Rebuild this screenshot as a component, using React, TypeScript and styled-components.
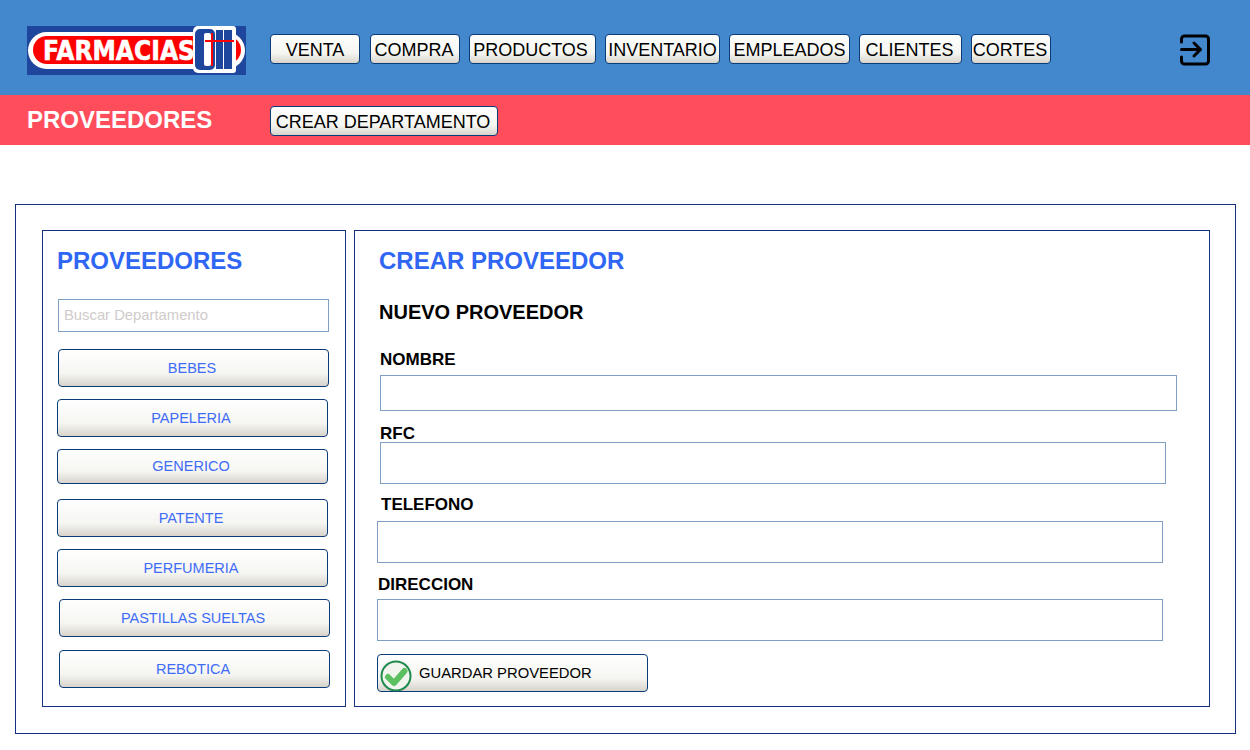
import styled, { createGlobalStyle } from 'styled-components';

const GlobalStyle = createGlobalStyle`
	html, body {
		margin: 0;
		padding: 0;
		background: #fff;
		font-family: 'Liberation Sans', Arial, sans-serif;
	}
	* {
		box-sizing: border-box;
	}
`;

const Header = styled.header`
	height: 95px;
	background: #4387cd;
	display: flex;
	align-items: center;
	padding: 0 27px;
`;

const Logo = styled.svg`
	width: 219px;
	height: 49px;
	flex-shrink: 0;
	margin-top: 6px;
`;

const Nav = styled.nav`
	display: flex;
	gap: 9px;
	margin-left: 24px;
	flex: 1;
	margin-top: 3px;
`;

const glossy = `
	background: linear-gradient(to bottom, #ffffff 0%, #f5f5f1 65%, #d8d4cc 100%);
	border: 1px solid #0a3d78;
	border-radius: 4px;
	cursor: pointer;
	font-family: 'Liberation Sans', Arial, sans-serif;
`;

const NavButton = styled.button<{ $width: number; $gapRight: number; $nudge: number }>`
	${glossy}
	width: ${(p) => p.$width}px;
	height: 30px;
	margin-right: ${(p) => p.$gapRight}px;
	padding: 2px ${(p) => p.$nudge}px 0 0;
	font-size: 18px;
	color: #000;
`;

const ExitIcon = styled.svg`
	width: 32px;
	height: 32px;
	margin-right: 11px;
	margin-top: 5px;
	flex-shrink: 0;
`;

const SubBar = styled.div`
	height: 50px;
	background: #ff4d5c;
	display: flex;
	align-items: center;
	padding: 0 27px;
`;

const SubTitle = styled.h1`
	margin: 0;
	width: 243px;
	font-size: 24px;
	font-weight: 700;
	color: #fff;
`;

const CreateButton = styled.button`
	${glossy}
	width: 228px;
	height: 30px;
	margin-top: 1px;
	padding: 3px 2px 0 0;
	font-size: 18px;
	color: #000;
`;

const Frame = styled.main`
	margin: 59px 14px 0 15px;
	height: 530px;
	border: 1px solid #14307e;
	padding: 25px 25px 26px 26px;
	display: flex;
	gap: 8px;
`;

const Sidebar = styled.aside`
	width: 304px;
	border: 1px solid #14307e;
	padding: 14px 15px 0 14px;
	display: flex;
	flex-direction: column;
`;

const SectionTitle = styled.h2`
	margin: 0;
	font-size: 24px;
	line-height: 32px;
	font-weight: 700;
	color: #2f66f4;
`;

const Search = styled.input`
	width: 271px;
	height: 33px;
	margin: 22px 0 17px 1px;
	padding: 0 5px 2px;
	border: 1px solid #7f9fc4;
	font-family: 'Liberation Sans', Arial, sans-serif;
	font-size: 14.8px;
	outline: none;

	&::placeholder {
		color: #cfcbcb;
		opacity: 1;
	}
`;

const CategoryList = styled.div`
	display: flex;
	flex-direction: column;
`;

const CategoryButton = styled.button<{ $height: number; $shift: number; $gap: number; $lift: number }>`
	${glossy}
	width: 271px;
	height: ${(p) => p.$height}px;
	margin-left: ${(p) => p.$shift}px;
	margin-bottom: ${(p) => p.$gap}px;
	padding: 0 3px ${(p) => p.$lift}px 0;
	font-size: 14.5px;
	color: #3f6cf7;
`;

const Content = styled.section`
	width: 856px;
	border: 1px solid #14307e;
	padding: 14px 0 0 22px;
`;

const ContentTitle = styled(SectionTitle)`
	margin-left: 2px;
`;

const FormTitle = styled.h3`
	margin: 22px 0 0 2px;
	font-size: 20px;
	line-height: 26px;
	font-weight: 700;
	color: #000;
`;

const Field = styled.div<{ $shift: number; $top: number }>`
	display: flex;
	flex-direction: column;
	margin-left: ${(p) => p.$shift}px;
	margin-top: ${(p) => p.$top}px;
`;

const Label = styled.label<{ $shift: number; $gap: number }>`
	font-size: 17px;
	line-height: 18px;
	font-weight: 700;
	color: #000;
	margin-left: ${(p) => p.$shift}px;
	margin-bottom: ${(p) => p.$gap}px;
`;

const TextInput = styled.input<{ $width: number; $height: number }>`
	width: ${(p) => p.$width}px;
	height: ${(p) => p.$height}px;
	border: 1px solid #7f9fc4;
	outline: none;
	background: #fff;
`;

const SaveButton = styled.button`
	${glossy}
	width: 271px;
	height: 38px;
	margin: 13px 0 0 0;
	padding: 0 0 0 2px;
	display: flex;
	align-items: center;
	font-size: 14.8px;
	color: #000;
`;

const CheckIcon = styled.svg`
	width: 32px;
	height: 32px;
	margin: 5px 7px 0 0;
	flex-shrink: 0;
`;

const navItems = [
	{ label: 'VENTA', width: 90, gapRight: 1, nudge: 0 },
	{ label: 'COMPRA', width: 90, gapRight: 0, nudge: 2 },
	{ label: 'PRODUCTOS', width: 127, gapRight: 0, nudge: 4 },
	{ label: 'INVENTARIO', width: 115, gapRight: 0, nudge: 0 },
	{ label: 'EMPLEADOS', width: 121, gapRight: 0, nudge: 0 },
	{ label: 'CLIENTES', width: 103, gapRight: 0, nudge: 2 },
	{ label: 'CORTES', width: 80, gapRight: 0, nudge: 2 },
];

const categories = [
	{ label: 'BEBES', height: 38, shift: 1, gap: 12, lift: 0 },
	{ label: 'PAPELERIA', height: 38, shift: 0, gap: 12, lift: 0 },
	{ label: 'GENERICO', height: 35, shift: 0, gap: 15, lift: 2 },
	{ label: 'PATENTE', height: 38, shift: 0, gap: 12, lift: 0 },
	{ label: 'PERFUMERIA', height: 38, shift: 0, gap: 12, lift: 0 },
	{ label: 'PASTILLAS SUELTAS', height: 38, shift: 2, gap: 13, lift: 0 },
	{ label: 'REBOTICA', height: 38, shift: 2, gap: 0, lift: 0 },
];

const fields = [
	{ label: 'NOMBRE', labelShift: 0, gap: 6, width: 797, height: 36, shift: 3, top: 26 },
	{ label: 'RFC', labelShift: 0, gap: -1, width: 786, height: 42, shift: 3, top: 14 },
	{ label: 'TELEFONO', labelShift: 4, gap: 7, width: 786, height: 42, shift: 0, top: 12 },
	{ label: 'DIRECCION', labelShift: 1, gap: 5, width: 786, height: 42, shift: 0, top: 13 },
];

const FarmaciasLogo = () => (
	<Logo viewBox='0 0 219 49' aria-label='Farmacias 911'>
		<rect width='219' height='49' fill='#1e469c' />
		<rect x='1' y='6' width='217' height='37' rx='18.5' fill='#fff' />
		<rect x='6' y='10' width='208' height='28' rx='14' fill='#ff0000' />
		<text
			x='16'
			y='34'
			fontFamily="'DejaVu Sans', sans-serif"
			fontSize='27'
			fontWeight='700'
			fill='#fff'
			stroke='#fff'
			strokeWidth='0.6'
			textLength='152'
			lengthAdjust='spacingAndGlyphs'
		>
			FARMACIAS
		</text>
		<path d='M171 0h35a3 3 0 0 1 3 3v41a3 3 0 0 1-3 3h-35a5 5 0 0 1-5-5V5a5 5 0 0 1 5-5z' fill='#fff' />
		<rect x='168' y='3' width='20' height='41' rx='5' fill='#1e469c' />
		<rect x='177' y='7' width='7' height='33' rx='2' fill='#fff' />
		<rect x='189' y='4' width='7' height='39' fill='#1e469c' />
		<rect x='197' y='4' width='8' height='39' fill='#1e469c' />
		<rect x='178' y='14' width='29' height='2' fill='#ff0000' />
		<rect x='184' y='7' width='2' height='33' fill='#ff0000' />
	</Logo>
);

const App = () => {
	return (
		<>
			<GlobalStyle />
			<Header>
				<FarmaciasLogo />
				<Nav>
					{navItems.map(({ label, width, gapRight, nudge }) => (
						<NavButton key={label} $width={width} $gapRight={gapRight} $nudge={nudge}>
							{label}
						</NavButton>
					))}
				</Nav>
				<ExitIcon viewBox='0 0 32 32' fill='none' stroke='#000' strokeWidth='3' strokeLinecap='round' strokeLinejoin='round'>
					<path d='M1.5 8V5a3 3 0 0 1 3-3h21a3 3 0 0 1 3 3v22a3 3 0 0 1-3 3h-21a3 3 0 0 1-3-3v-4' />
					<path d='M1.5 15.5h18' />
					<path d='M14 9l6.5 6.5L14 22' />
				</ExitIcon>
			</Header>
			<SubBar>
				<SubTitle>PROVEEDORES</SubTitle>
				<CreateButton>CREAR DEPARTAMENTO</CreateButton>
			</SubBar>
			<Frame>
				<Sidebar>
					<SectionTitle>PROVEEDORES</SectionTitle>
					<Search placeholder='Buscar Departamento' />
					<CategoryList>
						{categories.map(({ label, height, shift, gap, lift }) => (
							<CategoryButton key={label} $height={height} $shift={shift} $gap={gap} $lift={lift}>
								{label}
							</CategoryButton>
						))}
					</CategoryList>
				</Sidebar>
				<Content>
					<ContentTitle>CREAR PROVEEDOR</ContentTitle>
					<FormTitle>NUEVO PROVEEDOR</FormTitle>
					{fields.map((f) => (
						<Field key={f.label} $shift={f.shift} $top={f.top}>
							<Label $shift={f.labelShift} $gap={f.gap}>
								{f.label}
							</Label>
							<TextInput $width={f.width} $height={f.height} />
						</Field>
					))}
					<SaveButton>
						<CheckIcon viewBox='0 0 32 32'>
							<circle cx='16' cy='16' r='14.5' fill='#f2f4ee' stroke='#1f8a4c' strokeWidth='2' />
							<path
								d='M8 17l6 6 10.5-12'
								fill='none'
								stroke='#5cbf60'
								strokeWidth='6'
								strokeLinecap='round'
								strokeLinejoin='round'
							/>
						</CheckIcon>
						GUARDAR PROVEEDOR
					</SaveButton>
				</Content>
			</Frame>
		</>
	);
};

export default App;
